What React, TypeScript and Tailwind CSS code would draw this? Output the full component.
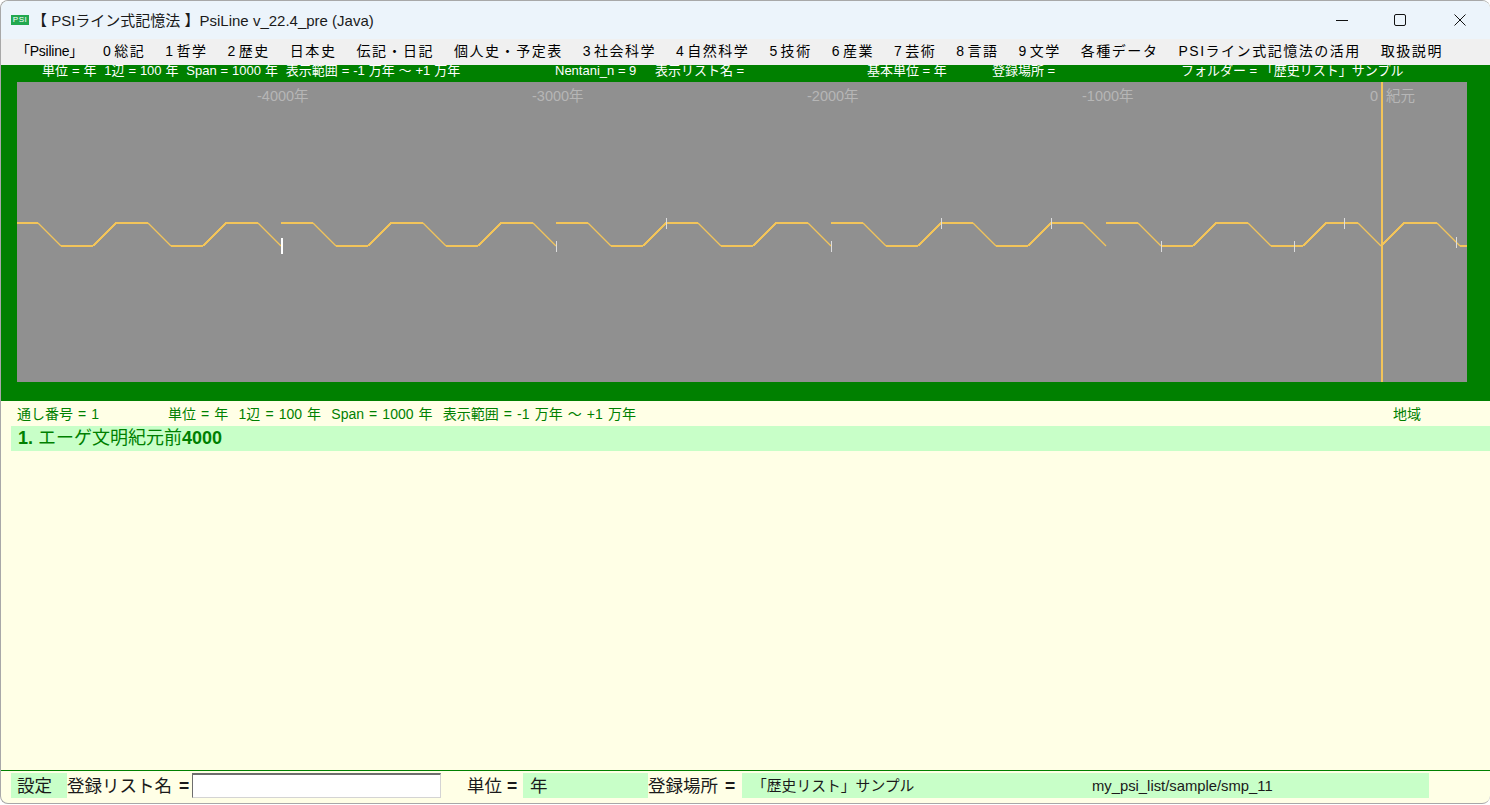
import React from 'react';

const FONT = "font-['Liberation_Sans','Noto_Sans_CJK_JP',sans-serif]";

const MENU = [
  '0 総記', '1 哲学', '2 歴史', '日本史', '伝記・日記', '個人史・予定表',
  '3 社会科学', '4 自然科学', '5 技術', '6 産業', '7 芸術', '8 言語', '9 文学',
  '各種データ', 'PSIライン式記憶法の活用', '取扱説明',
];

const HI = 223;
const LO = 246;
const wave = (x: number): number[][] =>
  [0, 32, 55, 87, 110, 142, 165, 197, 220, 252, 275].map((d, i) => [
    x + d,
    i % 4 === 0 || i % 4 === 1 ? HI : LO,
  ]);

const first = wave(6);
first[0] = [17, HI];

const LINES = [
  first,
  wave(281),
  wave(556),
  wave(831),
  [...wave(1106), [1404, HI], [1437, HI], [1460, LO], [1467, LO]],
];

const TICKS = [
  { x: 556, y1: 241, y2: 252 },
  { x: 666, y1: 218, y2: 229 },
  { x: 831, y1: 241, y2: 252 },
  { x: 941, y1: 218, y2: 229 },
  { x: 1051, y1: 218, y2: 229 },
  { x: 1161, y1: 241, y2: 252 },
  { x: 1294, y1: 241, y2: 252 },
  { x: 1344, y1: 218, y2: 229 },
  { x: 1456, y1: 237, y2: 248 },
];

const YEARS = [
  { label: '-4000年', cls: 'left-[240px]' },
  { label: '-3000年', cls: 'left-[515px]' },
  { label: '-2000年', cls: 'left-[790px]' },
  { label: '-1000年', cls: 'left-[1065px]' },
  { label: '0', cls: 'left-[1353px]' },
  { label: '紀元', cls: 'left-[1369px]' },
];

function Chart() {
  return (
    <div className="relative w-[1450px] h-[300px] bg-[#909090]">
      <svg className="block" width="1450" height="300" viewBox="17 82 1450 300" fill="none">
        {LINES.map((pts) =>
          pts.slice(1).map((p, i) => {
            const down = p[1] > pts[i][1];
            return (
              <line
                key={`${p[0]}-${i}`}
                x1={pts[i][0]}
                y1={pts[i][1]}
                x2={p[0]}
                y2={p[1]}
                stroke="#f2c45a"
                strokeWidth={down ? 1.3 : 2}
                shapeRendering={down ? 'auto' : 'crispEdges'}
              />
            );
          }),
        )}
        <rect x="1381" y="82" width="2" height="300" fill="#f2c45a" />
        <rect x="281" y="238" width="2" height="16" fill="#ffffff" />
        {TICKS.map((t) => (
          <line key={t.x} x1={t.x + 0.5} x2={t.x + 0.5} y1={t.y1} y2={t.y2} stroke="#dddddd" strokeWidth="1" />
        ))}
      </svg>
      {YEARS.map((y) => (
        <span key={y.label} className={`absolute top-[5px] text-[14.5px] leading-[18px] text-[#b6b6b6] ${y.cls}`}>
          {y.label}
        </span>
      ))}
    </div>
  );
}

export default function App() {
  return (
    <div className={`w-[1490px] h-[805px] bg-white ${FONT}`}>
      <div className="flex flex-col w-[1490px] h-[804px] rounded-lg overflow-hidden border-l border-t border-b border-[#a8a8a8] bg-[#ffffe6]">
        {/* Title bar */}
        <div className="flex items-center h-[38px] shrink-0 bg-[#ecf4fb] pl-[10px]">
          <div className="flex items-center justify-center w-[18px] h-[10px] bg-[#22a84f] text-white text-[8px] leading-none tracking-[0.5px]">
            PSI
          </div>
          <div className="ml-[3px] mt-[2px] text-[15px] text-[#1a1a1a] whitespace-nowrap">
            【 PSIライン式記憶法 】PsiLine v_22.4_pre (Java)
          </div>
          <div className="flex items-center ml-auto">
            <svg className="mr-[46px]" width="12" height="12" viewBox="0 0 12 12" fill="none" stroke="#111111">
              <path d="M0 6.5h12" />
            </svg>
            <svg className="mr-[48px]" width="12" height="12" viewBox="0 0 12 12" fill="none" stroke="#111111">
              <rect x="0.5" y="0.5" width="11" height="11" rx="1.5" />
            </svg>
            <svg className="mr-[24px]" width="12" height="12" viewBox="0 0 12 12" fill="none" stroke="#111111">
              <path d="M0.5 0.5l11 11M11.5 0.5l-11 11" />
            </svg>
          </div>
        </div>

        {/* Menu */}
        <div className="flex items-center gap-5 h-[26px] shrink-0 pb-[1px] bg-[#f0f0f0] pl-[15px] text-[14px] tracking-[1.525px] [word-spacing:-3.5px] text-black whitespace-nowrap">
          <span className="tracking-[-0.25px]">「Psiline」</span>
          {MENU.map((m) => (
            <span key={m}>{m}</span>
          ))}
        </div>

        {/* Green panel */}
        <div className="h-[336px] shrink-0 bg-[#008000] pl-4">
          <div className="flex h-[17px] items-center pb-[6px] pl-[25px] text-[13px] leading-none text-white whitespace-nowrap">
            <span className="w-[513px] [word-spacing:0.3px]">単位 = 年&nbsp; 1辺 = 100 年&nbsp; Span = 1000 年&nbsp; 表示範囲 = -1 万年 ～ +1 万年</span>
            <span className="w-[100px]">Nentani_n = 9</span>
            <span className="w-[212px]">表示リスト名 =</span>
            <span className="w-[125px]">基本単位 = 年</span>
            <span className="w-[189px]">登録場所 =</span>
            <span>フォルダー = 「歴史リスト」サンプル</span>
          </div>
          <Chart />
        </div>

        {/* List */}
        <div className="flex-1 text-[#008000]">
          <div className="flex items-center h-[25px] pl-4 pt-[1px] text-[14px] [word-spacing:1.2px] whitespace-nowrap">
            <span className="w-[151px]">通し番号 = 1</span>
            <span className="w-[1225px]">単位 = 年&nbsp; 1辺 = 100 年&nbsp; Span = 1000 年&nbsp; 表示範囲 = -1 万年 ～ +1 万年</span>
            <span>地域</span>
          </div>
          <div className="flex items-center h-[25px] ml-[10px] pl-[7px] bg-[#c8ffc8] text-[18px]">
            <span className="font-bold">1.</span>
            <span className="ml-[5px]">エーゲ文明紀元前</span>
            <span className="font-bold">4000</span>
          </div>
        </div>

        {/* Bottom form */}
        <div className="flex h-[33px] shrink-0 pt-[2px] pl-[10px] border-t border-[#008000] text-[17.5px] leading-[27px] text-[#1a1a1a] whitespace-nowrap">
          <div className="w-[56px] h-[25px] pl-[6px] bg-[#c8ffc8]">設定</div>
          <div className="w-[125px] [word-spacing:2px]">登録リスト名 <b className="font-bold">=</b></div>
          <input className="w-[249px] h-[25px] bg-white border border-[#d4d4d4] border-t-2 border-t-[#6e6e6e] border-l-[#6e6e6e]" />
          <div className="w-[56px] ml-[26px]">単位 <b className="font-bold">=</b></div>
          <div className="w-[125px] h-[25px] pl-[7px] bg-[#c8ffc8]">年</div>
          <div className="w-[94px] [word-spacing:2px]">登録場所 <b className="font-bold">=</b></div>
          <div className="flex w-[687px] h-[25px] bg-[#c8ffc8] text-[14.8px] [word-spacing:0]">
            <span className="w-[350px] pl-[10px]">「歴史リスト」サンプル</span>
            <span>my_psi_list/sample/smp_11</span>
          </div>
        </div>
      </div>
    </div>
  );
}
